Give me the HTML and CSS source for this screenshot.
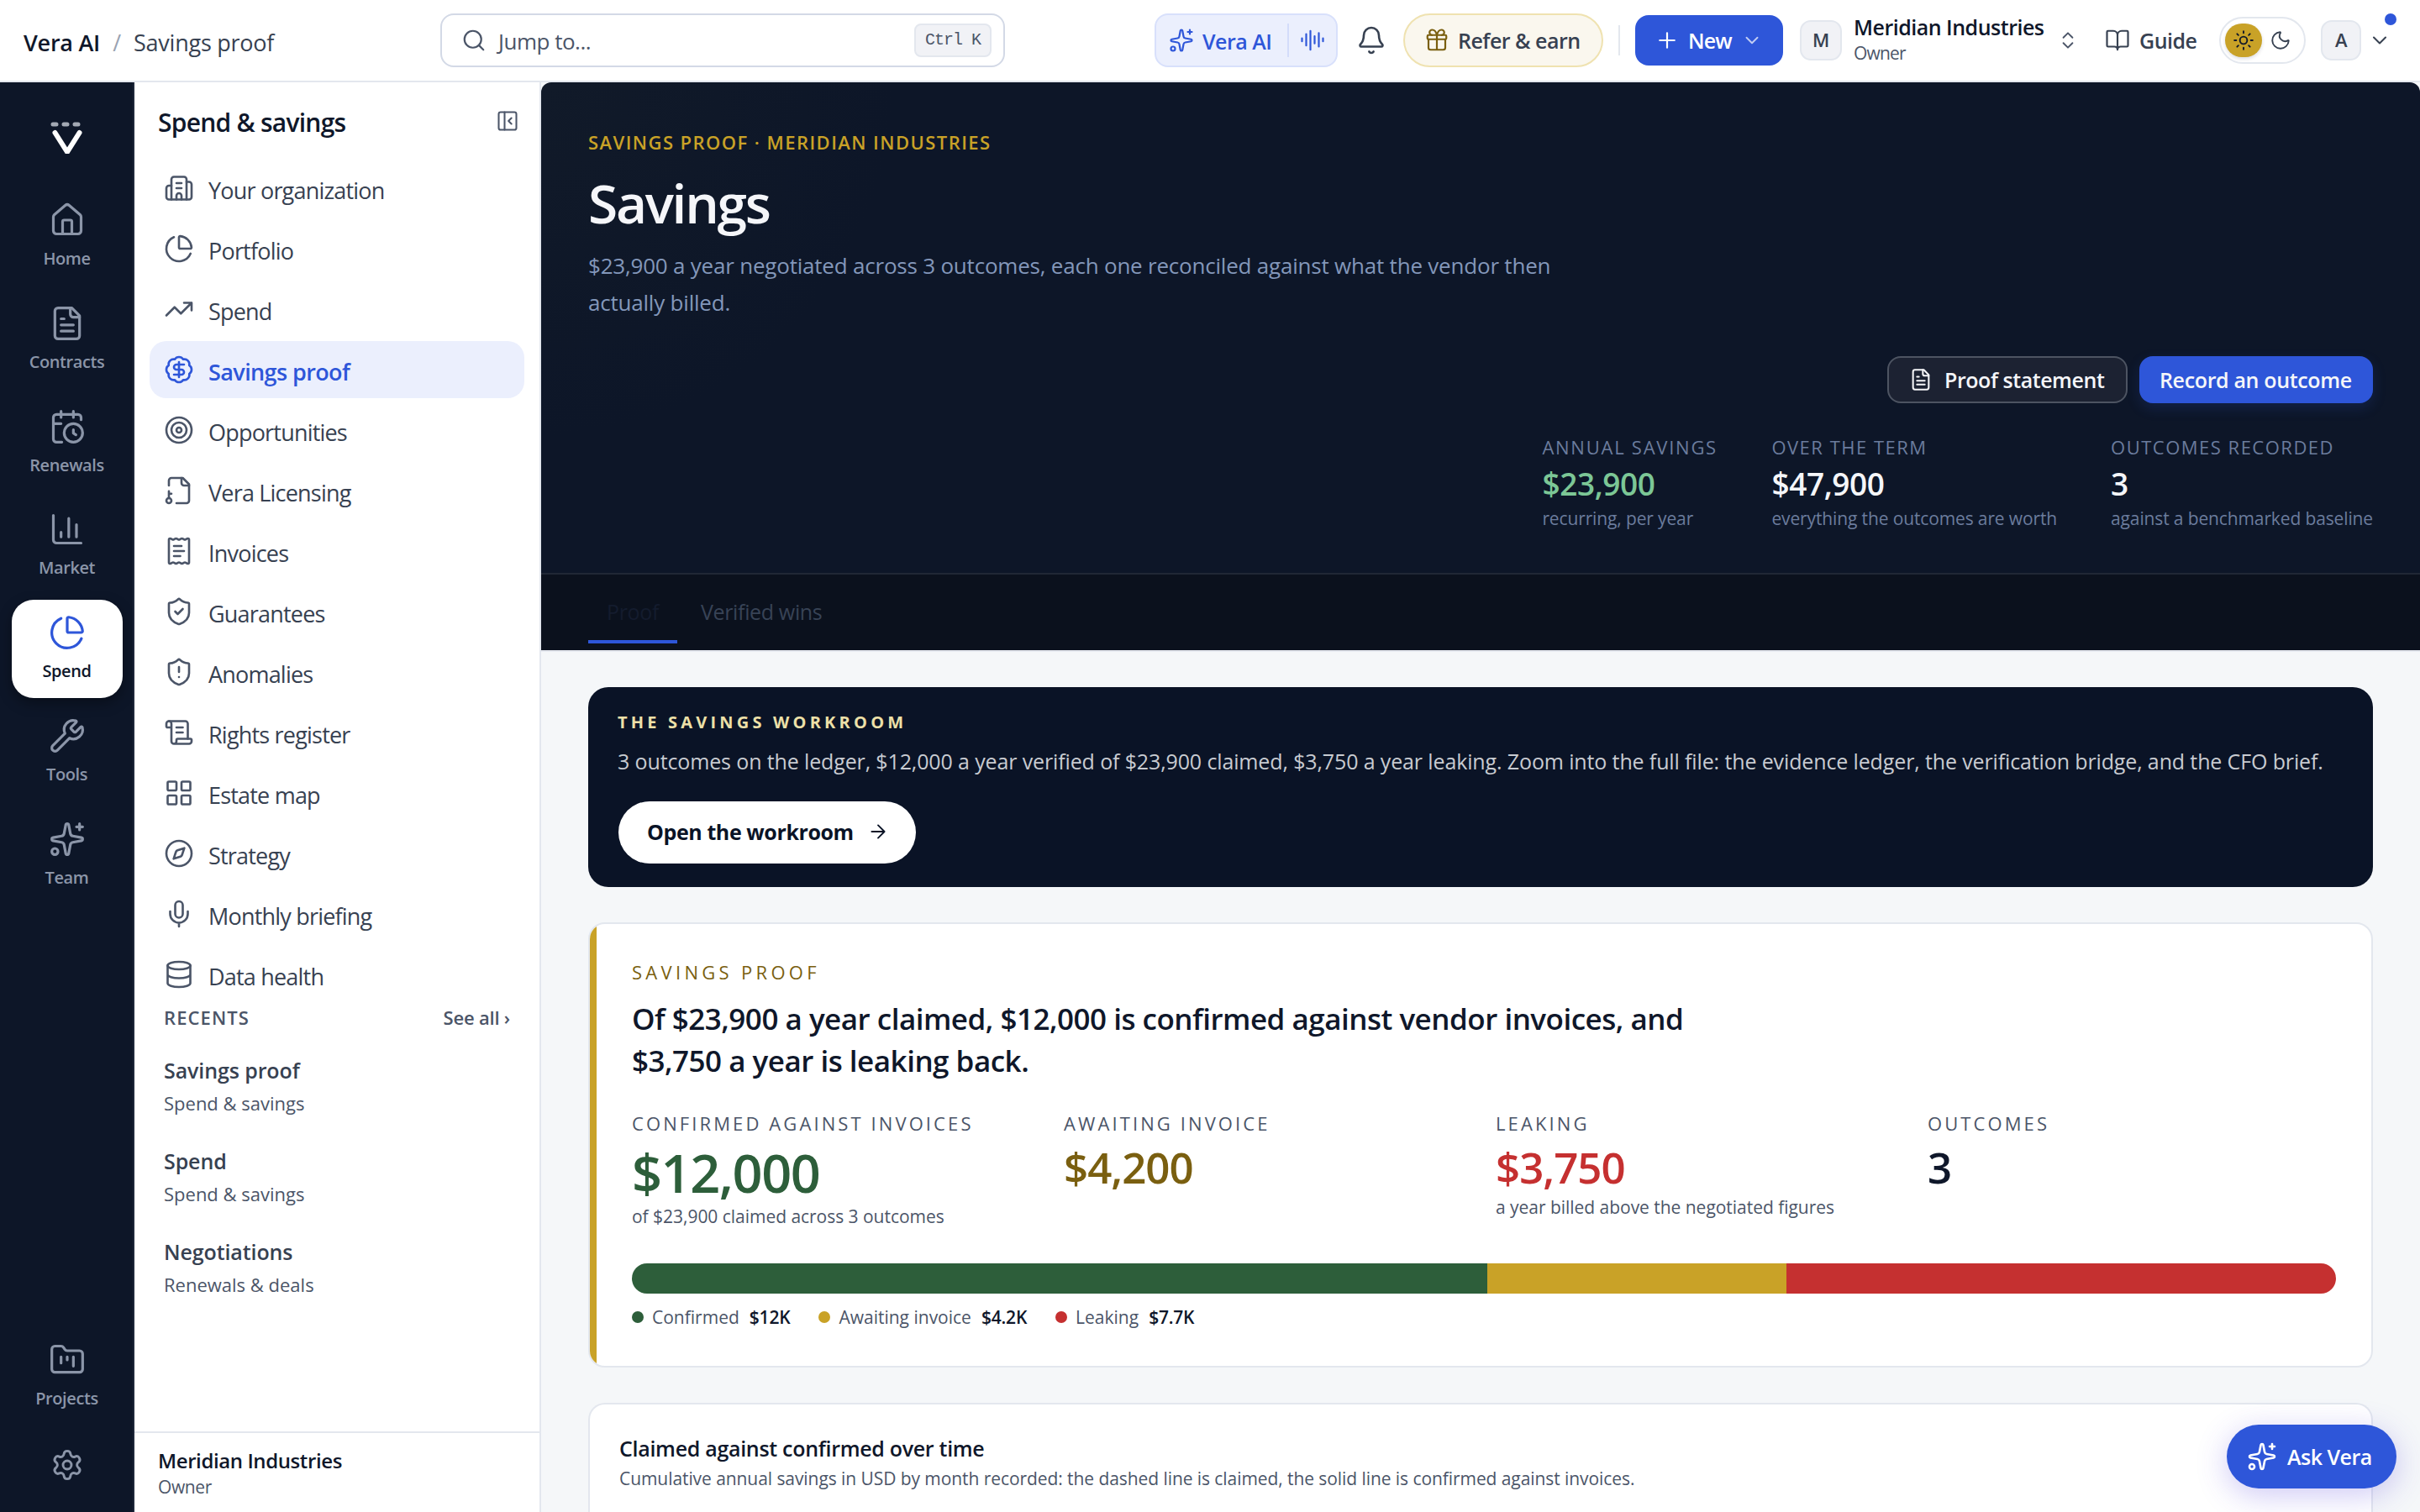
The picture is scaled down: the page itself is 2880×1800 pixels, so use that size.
FILE: index.html
```
<!DOCTYPE html>
<html lang="en">
<head>
	<meta charset="utf-8">
	<title>Savings proof - Vera AI</title>
	<link rel="stylesheet" href="styles.css">
</head>

<body>
	<!-- icon set -->
	<svg class="sprite">
		<symbol id="search" viewBox="0 0 24 24"><circle cx="11" cy="11" r="8"/><path d="m21 21-4.3-4.3"/></symbol>
		<symbol id="sparkles" viewBox="0 0 24 24"><path d="M11.017 2.814a1 1 0 0 1 1.966 0l1.051 5.558a2 2 0 0 0 1.594 1.594l5.558 1.051a1 1 0 0 1 0 1.966l-5.558 1.051a2 2 0 0 0-1.594 1.594l-1.051 5.558a1 1 0 0 1-1.966 0l-1.051-5.558a2 2 0 0 0-1.594-1.594l-5.558-1.051a1 1 0 0 1 0-1.966l5.558-1.051a2 2 0 0 0 1.594-1.594z"/><path d="M20 2v4M22 4h-4"/><circle cx="4" cy="20" r="2"/></symbol>
		<symbol id="wave" viewBox="0 0 24 24"><path d="M2 10v3M6 6v11M10 3v18M14 8v7M18 5v13M22 10v3"/></symbol>
		<symbol id="bell" viewBox="0 0 24 24"><path d="M10.268 21a2 2 0 0 0 3.464 0"/><path d="M3.262 15.326A1 1 0 0 0 4 17h16a1 1 0 0 0 .74-1.673C19.41 13.956 18 12.499 18 8A6 6 0 0 0 6 8c0 4.499-1.411 5.956-2.738 7.326"/></symbol>
		<symbol id="gift" viewBox="0 0 24 24"><path d="M12 7v14M20 11v8a2 2 0 0 1-2 2H6a2 2 0 0 1-2-2v-8"/><path d="M7.5 7a1 1 0 0 1 0-5A4.8 8 0 0 1 12 7a4.8 8 0 0 1 4.5-5 1 1 0 0 1 0 5"/><rect x="3" y="7" width="18" height="4" rx="1"/></symbol>
		<symbol id="plus" viewBox="0 0 24 24"><path d="M5 12h14M12 5v14"/></symbol>
		<symbol id="chevron" viewBox="0 0 24 24"><path d="m6 9 6 6 6-6"/></symbol>
		<symbol id="updown" viewBox="0 0 24 24"><path d="m7 15 5 5 5-5M7 9l5-5 5 5"/></symbol>
		<symbol id="book" viewBox="0 0 24 24"><path d="M12 7v14M3 18a1 1 0 0 1-1-1V4a1 1 0 0 1 1-1h5a4 4 0 0 1 4 4 4 4 0 0 1 4-4h5a1 1 0 0 1 1 1v13a1 1 0 0 1-1 1h-6a3 3 0 0 0-3 3 3 3 0 0 0-3-3z"/></symbol>
		<symbol id="sun" viewBox="0 0 24 24"><circle cx="12" cy="12" r="4"/><path d="M12 2v2M12 20v2M4.93 4.93l1.41 1.41M17.66 17.66l1.41 1.41M2 12h2M20 12h2M6.34 17.66l-1.41 1.41M19.07 4.93l-1.41 1.41"/></symbol>
		<symbol id="moon" viewBox="0 0 24 24"><path d="M20.985 12.486a9 9 0 1 1-9.473-9.472c.405-.022.617.46.402.803a6 6 0 0 0 8.268 8.268c.344-.215.825-.004.803.401"/></symbol>
		<symbol id="home" viewBox="0 0 24 24"><path d="M15 21v-8a1 1 0 0 0-1-1h-4a1 1 0 0 0-1 1v8"/><path d="M3 10a2 2 0 0 1 .709-1.528l7-6a2 2 0 0 1 2.582 0l7 6A2 2 0 0 1 21 10v9a2 2 0 0 1-2 2H5a2 2 0 0 1-2-2z"/></symbol>
		<symbol id="file" viewBox="0 0 24 24"><path d="M15 2H6a2 2 0 0 0-2 2v16a2 2 0 0 0 2 2h12a2 2 0 0 0 2-2V7z"/><path d="M14 2v4a2 2 0 0 0 2 2h4M10 9H8M16 13H8M16 17H8"/></symbol>
		<symbol id="calendar" viewBox="0 0 24 24"><path d="M16 14v2.2l1.6 1M16 2v4M21 7.5V6a2 2 0 0 0-2-2H5a2 2 0 0 0-2 2v14a2 2 0 0 0 2 2h3.5M3 10h5M8 2v4"/><circle cx="16" cy="16" r="6"/></symbol>
		<symbol id="chart" viewBox="0 0 24 24"><path d="M3 3v16a2 2 0 0 0 2 2h16M18 17V9M13 17V5M8 17v-3"/></symbol>
		<symbol id="pie" viewBox="0 0 24 24"><path d="M21 12c.552 0 1.005-.449.95-.998a10 10 0 0 0-8.953-8.951c-.55-.055-.998.398-.998.95v8a1 1 0 0 0 1 1z"/><path d="M21.21 15.89A10 10 0 1 1 8 2.83"/></symbol>
		<symbol id="wrench" viewBox="0 0 24 24"><path d="M14.7 6.3a1 1 0 0 0 0 1.4l1.6 1.6a1 1 0 0 0 1.4 0l3.106-3.105c.32-.322.863-.22.983.218a6 6 0 0 1-8.259 7.057l-7.91 7.91a1 1 0 0 1-2.999-3l7.91-7.91a6 6 0 0 1 7.057-8.259c.438.12.54.662.219.984z"/></symbol>
		<symbol id="folder" viewBox="0 0 24 24"><path d="M4 20h16a2 2 0 0 0 2-2V8a2 2 0 0 0-2-2h-7.93a2 2 0 0 1-1.66-.9l-.82-1.2A2 2 0 0 0 7.93 3H4a2 2 0 0 0-2 2v13c0 1.1.9 2 2 2Z"/><path d="M8 10v4M12 10v2M16 10v6"/></symbol>
		<symbol id="gear" viewBox="0 0 24 24"><path d="M9.671 4.136a2.34 2.34 0 0 1 4.659 0 2.34 2.34 0 0 0 3.319 1.915 2.34 2.34 0 0 1 2.33 4.033 2.34 2.34 0 0 0 0 3.831 2.34 2.34 0 0 1-2.33 4.033 2.34 2.34 0 0 0-3.319 1.915 2.34 2.34 0 0 1-4.659 0 2.34 2.34 0 0 0-3.32-1.915 2.34 2.34 0 0 1-2.33-4.033 2.34 2.34 0 0 0 0-3.831A2.34 2.34 0 0 1 6.35 6.051a2.34 2.34 0 0 0 3.319-1.915"/><circle cx="12" cy="12" r="3"/></symbol>
		<symbol id="panel" viewBox="0 0 24 24"><rect x="3" y="3" width="18" height="18" rx="2"/><path d="M9 3v18M16 15l-3-3 3-3"/></symbol>
		<symbol id="building" viewBox="0 0 24 24"><path d="M10 12h4M10 8h4M14 21v-3a2 2 0 0 0-4 0v3"/><path d="M6 10H4a2 2 0 0 0-2 2v7a2 2 0 0 0 2 2h16a2 2 0 0 0 2-2V9a2 2 0 0 0-2-2h-2"/><path d="M6 21V5a2 2 0 0 1 2-2h8a2 2 0 0 1 2 2v16"/></symbol>
		<symbol id="trend" viewBox="0 0 24 24"><path d="M16 7h6v6M22 7l-8.5 8.5-5-5L2 17"/></symbol>
		<symbol id="badge" viewBox="0 0 24 24"><path d="M3.85 8.62a4 4 0 0 1 4.78-4.77 4 4 0 0 1 6.74 0 4 4 0 0 1 4.78 4.78 4 4 0 0 1 0 6.74 4 4 0 0 1-4.77 4.78 4 4 0 0 1-6.75 0 4 4 0 0 1-4.78-4.77 4 4 0 0 1 0-6.76Z"/><path d="M16 8h-6a2 2 0 1 0 0 4h4a2 2 0 1 1 0 4H8M12 18V6"/></symbol>
		<symbol id="target" viewBox="0 0 24 24"><circle cx="12" cy="12" r="10"/><circle cx="12" cy="12" r="6"/><circle cx="12" cy="12" r="2"/></symbol>
		<symbol id="filekey" viewBox="0 0 24 24"><path d="M10 22h8a2 2 0 0 0 2-2V7l-5-5H6a2 2 0 0 0-2 2v4"/><path d="M14 2v4a2 2 0 0 0 2 2h4M4 18v-5.500M4 14.500h2"/><circle cx="4" cy="20" r="2"/></symbol>
		<symbol id="receipt" viewBox="0 0 24 24"><path d="M4 3a1 1 0 0 1 1-1 1.3 1.3 0 0 1 .7.2l.933.6a1.3 1.3 0 0 0 1.4 0l.934-.6a1.3 1.3 0 0 1 1.4 0l.933.6a1.3 1.3 0 0 0 1.4 0l.933-.6a1.3 1.3 0 0 1 1.4 0l.934.6a1.3 1.3 0 0 0 1.4 0l.933-.6A1.3 1.3 0 0 1 19 2a1 1 0 0 1 1 1v18a1 1 0 0 1-1 1 1.3 1.3 0 0 1-.7-.2l-.933-.6a1.3 1.3 0 0 0-1.4 0l-.934.6a1.3 1.3 0 0 1-1.4 0l-.933-.6a1.3 1.3 0 0 0-1.4 0l-.933.6a1.3 1.3 0 0 1-1.4 0l-.934-.6a1.3 1.3 0 0 0-1.4 0l-.933.6a1.3 1.3 0 0 1-.7.2 1 1 0 0 1-1-1z"/><path d="M14 8H8M16 12H8M13 16H8"/></symbol>
		<symbol id="shield" viewBox="0 0 24 24"><path d="M20 13c0 5-3.5 7.5-7.66 8.95a1 1 0 0 1-.67-.01C7.5 20.5 4 18 4 13V6a1 1 0 0 1 1-1c2 0 4.5-1.2 6.24-2.72a1.17 1.17 0 0 1 1.52 0C14.51 3.81 17 5 19 5a1 1 0 0 1 1 1z"/></symbol>
		<symbol id="scroll" viewBox="0 0 24 24"><path d="M15 12h-5M15 8h-5M19 17V5a2 2 0 0 0-2-2H4"/><path d="M8 21h12a2 2 0 0 0 2-2v-1a1 1 0 0 0-1-1H11a1 1 0 0 0-1 1v1a2 2 0 1 1-4 0V5a2 2 0 1 0-4 0v2a1 1 0 0 0 1 1h3"/></symbol>
		<symbol id="grid" viewBox="0 0 24 24"><rect x="3" y="3" width="7" height="7" rx="1"/><rect x="14" y="3" width="7" height="7" rx="1"/><rect x="14" y="14" width="7" height="7" rx="1"/><rect x="3" y="14" width="7" height="7" rx="1"/></symbol>
		<symbol id="compass" viewBox="0 0 24 24"><circle cx="12" cy="12" r="10"/><path d="m16.24 7.76-1.804 5.411a2 2 0 0 1-1.265 1.265L7.76 16.24l1.804-5.411a2 2 0 0 1 1.265-1.265z"/></symbol>
		<symbol id="mic" viewBox="0 0 24 24"><path d="M12 19v3M19 10v2a7 7 0 0 1-14 0v-2"/><rect x="9" y="2" width="6" height="13" rx="3"/></symbol>
		<symbol id="database" viewBox="0 0 24 24"><ellipse cx="12" cy="5" rx="9" ry="3"/><path d="M3 5v14a9 3 0 0 0 18 0V5M3 12a9 3 0 0 0 18 0"/></symbol>
		<symbol id="arrow" viewBox="0 0 24 24"><path d="M5 12h14M12 5l7 7-7 7"/></symbol>
	</svg>

	<header class="topbar">
		<div class="crumbs"><b>Vera AI</b><i>/</i><span>Savings proof</span></div>
		<div class="search">
			<svg class="icon s30"><use href="#search"/></svg>
			<span>Jump to...</span>
			<kbd>Ctrl K</kbd>
		</div>
		<div class="tools">
			<div class="vera">
				<svg class="icon s30"><use href="#sparkles"/></svg>
				<span>Vera AI</span>
				<div class="wave"><svg class="icon s30"><use href="#wave"/></svg></div>
			</div>
			<svg class="icon s36 bell"><use href="#bell"/></svg>
			<div class="refer"><svg class="icon s30"><use href="#gift"/></svg><span>Refer &amp; earn</span></div>
			<div class="divider"></div>
			<div class="new">
				<svg class="icon s30"><use href="#plus"/></svg>
				<span>New</span>
				<svg class="icon s26"><use href="#chevron"/></svg>
			</div>
			<div class="avatar org">M</div>
			<div class="account"><b>Meridian Industries</b><span>Owner</span></div>
			<svg class="icon s26 updown"><use href="#updown"/></svg>
			<div class="guide"><svg class="icon s30"><use href="#book"/></svg><span>Guide</span></div>
			<div class="theme">
				<div class="sun"><svg class="icon s26"><use href="#sun"/></svg></div>
				<svg class="icon s26"><use href="#moon"/></svg>
			</div>
			<div class="avatar">A</div>
			<svg class="icon s28 more"><use href="#chevron"/></svg>
		</div>
		<div class="dot"></div>
	</header>

	<div class="shell">
		<nav class="rail">
			<svg class="logo" viewBox="0 0 44 44">
				<path class="dashes" d="M5 9h4M18 9h4M31 9h4"/>
				<path class="vee" d="M7.500 19 22 42 36.500 19"/>
			</svg>
			<div class="rail-item"><svg class="icon s44"><use href="#home"/></svg>Home</div>
			<div class="rail-item"><svg class="icon s44"><use href="#file"/></svg>Contracts</div>
			<div class="rail-item"><svg class="icon s44"><use href="#calendar"/></svg>Renewals</div>
			<div class="rail-item"><svg class="icon s44"><use href="#chart"/></svg>Market</div>
			<div class="rail-item on"><svg class="icon s44"><use href="#pie"/></svg>Spend</div>
			<div class="rail-item"><svg class="icon s44"><use href="#wrench"/></svg>Tools</div>
			<div class="rail-item"><svg class="icon s44"><use href="#sparkles"/></svg>Team</div>
			<div class="rail-end">
				<div class="rail-item"><svg class="icon s44"><use href="#folder"/></svg>Projects</div>
				<svg class="icon s40"><use href="#gear"/></svg>
			</div>
		</nav>

		<aside class="sidebar">
			<div class="side-head">
				<h2>Spend &amp; savings</h2>
				<svg class="icon s28"><use href="#panel"/></svg>
			</div>
			<div class="menu">
				<a><svg class="icon s36"><use href="#building"/></svg><span>Your organization</span></a>
				<a><svg class="icon s36"><use href="#pie"/></svg><span>Portfolio</span></a>
				<a><svg class="icon s36"><use href="#trend"/></svg><span>Spend</span></a>
				<a class="on"><svg class="icon s36"><use href="#badge"/></svg><span>Savings proof</span></a>
				<a><svg class="icon s36"><use href="#target"/></svg><span>Opportunities</span></a>
				<a><svg class="icon s36"><use href="#filekey"/></svg><span>Vera Licensing</span></a>
				<a><svg class="icon s36"><use href="#receipt"/></svg><span>Invoices</span></a>
				<a><svg class="icon s36" viewBox="0 0 24 24"><use href="#shield"/><path d="m9 12 2 2 4-4"/></svg><span>Guarantees</span></a>
				<a><svg class="icon s36" viewBox="0 0 24 24"><use href="#shield"/><path d="M12 8v4M12 16h.01"/></svg><span>Anomalies</span></a>
				<a><svg class="icon s36"><use href="#scroll"/></svg><span>Rights register</span></a>
				<a><svg class="icon s36"><use href="#grid"/></svg><span>Estate map</span></a>
				<a><svg class="icon s36"><use href="#compass"/></svg><span>Strategy</span></a>
				<a><svg class="icon s36"><use href="#mic"/></svg><span>Monthly briefing</span></a>
				<a><svg class="icon s36"><use href="#database"/></svg><span>Data health</span></a>
			</div>
			<div class="recents-head"><span>RECENTS</span><b>See all ›</b></div>
			<div class="recent"><b>Savings proof</b><span>Spend &amp; savings</span></div>
			<div class="recent"><b>Spend</b><span>Spend &amp; savings</span></div>
			<div class="recent"><b>Negotiations</b><span>Renewals &amp; deals</span></div>
			<div class="side-foot"><b>Meridian Industries</b><span>Owner</span></div>
		</aside>

		<main>
			<section class="hero">
				<div class="eyebrow">SAVINGS PROOF · MERIDIAN INDUSTRIES</div>
				<h1>Savings</h1>
				<p>$23,900 a year negotiated across 3 outcomes, each one reconciled against what the vendor then actually billed.</p>
				<div class="actions">
					<button class="ghost"><svg class="icon s28"><use href="#file"/></svg>Proof statement</button>
					<button class="primary">Record an outcome</button>
				</div>
				<div class="stats">
					<div class="annual"><label>ANNUAL SAVINGS</label><strong class="mint">$23,900</strong><small>recurring, per year</small></div>
					<div><label>OVER THE TERM</label><strong>$47,900</strong><small>everything the outcomes are worth</small></div>
					<div><label>OUTCOMES RECORDED</label><strong>3</strong><small>against a benchmarked baseline</small></div>
				</div>
			</section>
			<div class="tabs">
				<a class="on">Proof</a>
				<a>Verified wins</a>
			</div>

			<div class="content">
				<section class="workroom">
					<h4>THE SAVINGS WORKROOM</h4>
					<p>3 outcomes on the ledger, $12,000 a year verified of $23,900 claimed, $3,750 a year leaking. Zoom into the full file: the evidence ledger, the verification bridge, and the CFO brief.</p>
					<button>Open the workroom<svg class="icon s26"><use href="#arrow"/></svg></button>
				</section>

				<section class="card proof">
					<div class="tag">SAVINGS PROOF</div>
					<h3>Of $23,900 a year claimed, $12,000 is confirmed against vendor invoices, and $3,750 a year is leaking back.</h3>
					<div class="figures">
						<div><label>CONFIRMED AGAINST INVOICES</label><strong class="big green">$12,000</strong><small>of $23,900 claimed across 3 outcomes</small></div>
						<div><label>AWAITING INVOICE</label><strong class="amber">$4,200</strong></div>
						<div><label>LEAKING</label><strong class="red">$3,750</strong><small>a year billed above the negotiated figures</small></div>
						<div><label>OUTCOMES</label><strong>3</strong></div>
					</div>
					<div class="bar">
						<div class="bg-green" style="width: 50.2%"></div>
						<div class="bg-gold" style="width: 17.55%"></div>
						<div class="bg-red" style="width: 32.25%"></div>
					</div>
					<div class="legend">
						<div><i class="bg-green"></i>Confirmed<b>$12K</b></div>
						<div><i class="bg-gold"></i>Awaiting invoice<b>$4.2K</b></div>
						<div><i class="bg-red"></i>Leaking<b>$7.7K</b></div>
					</div>
				</section>

				<section class="card chart">
					<h5>Claimed against confirmed over time</h5>
					<p>Cumulative annual savings in USD by month recorded: the dashed line is claimed, the solid line is confirmed against invoices.</p>
				</section>
			</div>
		</main>
	</div>

	<div class="ask"><svg class="icon s36"><use href="#sparkles"/></svg>Ask Vera</div>
</body>
</html>
```
FILE: styles.css
```
* {
	box-sizing: border-box;
}
body {
	margin: 0;
	height: 1800px;
	overflow: hidden;
	display: flex;
	flex-direction: column;
	font-family: "Open Sans", "Noto Sans", sans-serif;
	color: #0f172a;
	background-color: #f5f7f9;
	white-space: nowrap;
}
h1, h2, h3, h4, h5, p {
	margin: 0;
}
b, label, strong, small {
	display: block;
	font-weight: 600;
}
i {
	font-style: normal;
}
button {
	font-family: inherit;
	border: none;
	display: flex;
	align-items: center;
}
.sprite {
	position: absolute;
	width: 0;
	height: 0;
}
.icon {
	fill: none;
	stroke: currentColor;
	stroke-width: 1.75;
	stroke-linecap: round;
	stroke-linejoin: round;
	flex: none;
}
.s26 { width: 26px; height: 26px; }
.s28 { width: 28px; height: 28px; }
.s30 { width: 30px; height: 30px; }
.s36 { width: 36px; height: 36px; }
.s40 { width: 40px; height: 40px; }
.s44 { width: 44px; height: 44px; }

/* top bar */
.topbar {
	position: relative;
	flex: none;
	height: 98px;
	display: flex;
	align-items: center;
	padding: 0 34px 0 28px;
	background-color: #fff;
	border-bottom: 2px solid #e3e7ee;
	font-size: 25px;
	letter-spacing: -0.5px;
	color: #374151;
}
.crumbs {
	width: 496px;
	display: flex;
	padding-top: 4px;
	font-size: 27px;
	letter-spacing: -0.25px;
}
.crumbs b {
	color: #0f172a;
}
.crumbs i {
	width: 40px;
	text-align: center;
	color: #9aa3b2;
}
.search {
	width: 672px;
	height: 64px;
	display: flex;
	align-items: center;
	padding: 0 14px 0 23px;
	border: 2px solid #d3d9e6;
	border-radius: 16px;
	font-size: 26px;
	color: #4b5568;
}
.search span {
	margin-left: 14px;
	padding-top: 1px;
}
.search kbd {
	margin-left: auto;
	width: 92px;
	height: 40px;
	line-height: 35px;
	text-align: center;
	border: 2px solid #e3e7ee;
	border-radius: 8px;
	background-color: #f1f2f6;
	font-family: "Liberation Mono", monospace;
	font-size: 20px;
	letter-spacing: -1px;
}
.tools {
	margin-left: auto;
	display: flex;
	align-items: center;
	font-weight: 600;
}
.vera {
	width: 218px;
	height: 64px;
	display: flex;
	align-items: center;
	padding-left: 15px;
	border: 2px solid #d8e0fb;
	border-radius: 16px;
	background-color: #ebeffd;
	color: #2e56d9;
}
.vera span {
	width: 101px;
	padding-left: 10px;
	padding-top: 1px;
}
.wave {
	height: 40px;
	display: flex;
	align-items: center;
	margin-left: 10px;
	padding-left: 13px;
	border-left: 2px solid #d3dcfa;
}
.bell {
	margin: 0 20px 0 22px;
}
.refer {
	width: 238px;
	height: 64px;
	display: flex;
	align-items: center;
	gap: 10px;
	padding-left: 23px;
	border: 2px solid #efe2b0;
	border-radius: 32px;
	background-color: #faf7ee;
}
.refer .icon {
	color: #7a5f10;
}
.divider {
	width: 2px;
	height: 36px;
	margin: 0 18px;
	background-color: #e3e7ee;
}
.new {
	width: 176px;
	height: 60px;
	display: flex;
	align-items: center;
	padding-left: 23px;
	border-radius: 16px;
	background-color: #2e56d9;
	color: #fff;
}
.new span {
	width: 63px;
	margin-left: 10px;
	letter-spacing: -0.9px;
}
.new .s26 {
	opacity: .7;
}
.avatar {
	width: 48px;
	height: 48px;
	line-height: 43px;
	text-align: center;
	border: 2px solid #e3e7ee;
	border-radius: 13px;
	background-color: #f1f2f6;
	font-size: 22px;
}
.org {
	width: 50px;
	margin: 0 14px 0 20px;
}
.account {
	width: 230px;
}
.account b {
	line-height: 28px;
	color: #0f172a;
}
.account span {
	display: block;
	padding-top: 2px;
	line-height: 30px;
	font-size: 21px;
	font-weight: 400;
	letter-spacing: -0.8px;
	color: #4b5568;
}
.updown {
	margin: 0 31px 0 12px;
	color: #4b5568;
}
.guide {
	width: 110px;
	display: flex;
	align-items: center;
	gap: 11px;
}
.theme {
	width: 103px;
	height: 56px;
	display: flex;
	align-items: center;
	gap: 9px;
	margin: 0 18px 0 26px;
	padding-left: 5px;
	border: 2px solid #e3e7ee;
	border-radius: 28px;
}
.sun {
	width: 44px;
	height: 40px;
	display: flex;
	align-items: center;
	justify-content: center;
	border-radius: 20px;
	background-color: #c9a227;
	color: #0f172a;
	box-shadow: 0 2px 4px rgba(15, 23, 42, .15);
}
.more {
	margin-left: 8px;
}
.dot {
	position: absolute;
	top: 16px;
	right: 28px;
	width: 14px;
	height: 14px;
	border-radius: 50%;
	background-color: #2e56d9;
}

.shell {
	flex: 1;
	min-height: 0;
	display: flex;
}

/* dark icon rail */
.rail {
	width: 160px;
	display: flex;
	flex-direction: column;
	align-items: center;
	gap: 6px;
	padding: 41px 0 36px 1px;
	background-color: #0d1628;
	border-right: 2px solid #1e2739;
}
.logo {
	width: 44px;
	height: 44px;
	margin-bottom: 34px;
	fill: none;
	stroke-linecap: round;
	stroke-linejoin: round;
}
.dashes {
	stroke: #a3a9b4;
	stroke-width: 5;
}
.vee {
	stroke: #fff;
	stroke-width: 6;
}
.rail-item {
	flex: none;
	width: 132px;
	height: 116.8px;
	display: flex;
	flex-direction: column;
	align-items: center;
	gap: 9px;
	padding-top: 17px;
	line-height: 30px;
	font-size: 20px;
	font-weight: 600;
	letter-spacing: -0.4px;
	color: #8b95a8;
	border-radius: 26px;
}
.rail-item.on {
	background-color: #fff;
	color: #0f172a;
	box-shadow: 0 6px 16px rgba(0, 0, 0, .35);
}
.rail-item.on .icon {
	color: #2e56d9;
}
.rail-end {
	margin-top: auto;
	display: flex;
	flex-direction: column;
	align-items: center;
	gap: 27px;
	color: #8b95a8;
}

/* section menu */
.sidebar {
	width: 484px;
	display: flex;
	flex-direction: column;
	background-color: #fff;
	border-right: 2px solid #e3e7ee;
	color: #4b5568;
}
.side-head {
	flex: none;
	height: 92px;
	display: flex;
	align-items: center;
	justify-content: space-between;
	padding: 0 24px 0 28px;
}
.side-head h2 {
	padding-top: 2px;
	font-size: 30px;
	font-weight: 600;
	letter-spacing: -0.75px;
	color: #0f172a;
}
.menu {
	display: flex;
	flex-direction: column;
	gap: 4px;
	padding: 0 18px;
}
.menu a {
	height: 68px;
	display: flex;
	align-items: center;
	gap: 17px;
	padding-left: 17px;
	border-radius: 20px;
	font-size: 27px;
	letter-spacing: -0.8px;
}
.menu span {
	padding-top: 4px;
	color: #374151;
}
.menu .on {
	background-color: #ebeffd;
	color: #2e56d9;
	font-weight: 600;
	letter-spacing: -0.6px;
}
.menu .on span {
	color: #2e56d9;
}
.recents-head {
	height: 34px;
	display: flex;
	align-items: center;
	justify-content: space-between;
	margin-bottom: 14px;
	padding: 0 35px;
	font-size: 22px;
}
.recents-head span {
	font-weight: 600;
	letter-spacing: 1.1px;
}
.recents-head b {
	letter-spacing: -0.2px;
}
.recent {
	height: 108px;
	padding: 14px 35px 0;
	line-height: 36px;
	font-size: 22px;
}
.recent b {
	margin-bottom: 3px;
	font-size: 25px;
	letter-spacing: -0.1px;
	color: #374151;
}
.side-foot {
	height: 96px;
	margin-top: auto;
	padding: 17px 28px 0;
	line-height: 30px;
	border-top: 2px solid #e3e7ee;
	font-size: 21px;
	letter-spacing: -0.4px;
}
.side-foot b {
	line-height: 32px;
	font-size: 24px;
	color: #0f172a;
}

/* main column */
main {
	flex: 1;
	min-width: 0;
}
.hero {
	height: 586px;
	padding: 55px 56px 0;
	border-radius: 12px 12px 0 0;
	border-bottom: 2px solid #202735;
	background: radial-gradient(circle at 0 0, #111a29 0, #0d1628 420px);
	color: #f5f6f9;
}
.eyebrow {
	line-height: 32px;
	font-size: 22px;
	font-weight: 600;
	letter-spacing: 1.44px;
	color: #c9a227;
}
.hero h1 {
	margin-top: 22px;
	line-height: 70px;
	font-size: 64px;
	font-weight: 600;
	letter-spacing: -2.3px;
}
.hero p {
	width: 1200px;
	margin-top: 17px;
	line-height: 44px;
	font-size: 26px;
	letter-spacing: -0.21px;
	white-space: normal;
	color: #8397ba;
}
.actions {
	display: flex;
	justify-content: flex-end;
	gap: 14px;
	margin-top: 42px;
}
.actions button {
	height: 56px;
	border-radius: 16px;
	font-size: 25px;
	font-weight: 600;
	letter-spacing: -0.45px;
	color: #f5f6f9;
}
.ghost {
	width: 286px;
	gap: 14px;
	padding: 0 0 0 24px;
	border: 2px solid #4d5462;
	background-color: #1c2232;
}
.actions .primary {
	width: 278px;
	padding: 0 0 0 24px;
	letter-spacing: -0.35px;
	background-color: #2e56d9;
	box-shadow: 0 6px 16px rgba(46, 86, 217, .18);
}
.stats {
	display: flex;
	justify-content: flex-end;
	gap: 64px;
	margin-top: 36px;
	color: #6b7c9d;
}
.stats label {
	line-height: 32px;
	font-size: 22px;
	font-weight: 500;
	letter-spacing: 1.5px;
}
.stats strong {
	margin: 4px 0 2px;
	line-height: 48px;
	font-size: 37px;
	letter-spacing: -0.4px;
	color: #f5f6f9;
}
.stats .annual {
	width: 209px;
}
.stats .annual label {
	letter-spacing: 1.75px;
}
.stats .mint {
	color: #7cc796;
}
.stats small {
	line-height: 30px;
	font-size: 21px;
	font-weight: 400;
	letter-spacing: -0.13px;
}
.tabs {
	height: 92px;
	display: flex;
	gap: 6px;
	padding: 0 56px;
	border-bottom: 2px solid #e6e9f0;
	background-color: #0b111d;
	font-size: 25px;
	letter-spacing: -0.35px;
	color: #384356;
}
.tabs a {
	height: 82px;
	padding: 27px 22px 0;
	line-height: 34px;
}
.tabs .on {
	border-bottom: 4px solid #2e56d9;
	color: #141c2e;
}
.content {
	display: flex;
	flex-direction: column;
	gap: 42px;
	padding: 42px 56px 0;
}
.workroom {
	height: 238px;
	padding: 28px 35px;
	border-radius: 24px;
	background-color: #0a1326;
}
.workroom h4 {
	line-height: 28px;
	font-size: 20px;
	letter-spacing: 4.2px;
	color: #ede0a8;
}
.workroom p {
	margin: 12px 0 28px;
	line-height: 40px;
	font-size: 25px;
	letter-spacing: -0.13px;
	color: #c8cbd1;
}
.workroom button {
	width: 354px;
	height: 74px;
	justify-content: space-between;
	margin-left: 1px;
	padding: 0 32px 2px 34px;
	border-radius: 37px;
	background-color: #fff;
	font-size: 25px;
	font-weight: 700;
	letter-spacing: -0.4px;
	color: #0a1326;
}
.card {
	position: relative;
	overflow: hidden;
	background-color: #fff;
	border: 2px solid #e3e7ee;
	border-radius: 20px;
}
.proof {
	height: 530px;
	padding: 42px 42px 0 50px;
}
.proof::before {
	content: "";
	position: absolute;
	top: 0;
	left: 0;
	width: 8px;
	height: 100%;
	background-color: #c9a227;
}
.tag {
	line-height: 30px;
	font-size: 22px;
	font-weight: 500;
	letter-spacing: 4.3px;
	color: #7a5f10;
}
.proof h3 {
	width: 1290px;
	margin-top: 16px;
	line-height: 50px;
	font-size: 35px;
	font-weight: 600;
	letter-spacing: -0.5px;
	white-space: normal;
}
.figures {
	height: 142px;
	display: grid;
	grid-template-columns: repeat(4, 1fr);
	column-gap: 28px;
	margin-top: 34px;
}
.figures label {
	margin-bottom: 10px;
	line-height: 30px;
	font-size: 22px;
	font-weight: 500;
	letter-spacing: 3.1px;
	color: #4b5568;
}
.figures strong {
	margin-bottom: 5px;
	line-height: 55px;
	font-size: 51px;
	letter-spacing: -1px;
}
.figures .big {
	margin-bottom: 3px;
	line-height: 68px;
	font-size: 63px;
	letter-spacing: -1.4px;
}
.green { color: #2d5e3a; }
.amber { color: #7a5f10; }
.red { color: #c53030; }
.figures small {
	line-height: 30px;
	font-size: 21px;
	font-weight: 400;
	letter-spacing: -0.03px;
	color: #4b5568;
}
.bar {
	height: 36px;
	display: flex;
	margin-top: 40px;
	border-radius: 18px;
	overflow: hidden;
}
.bg-green { background-color: #2d5e3a; }
.bg-gold { background-color: #c9a227; }
.bg-red { background-color: #c53030; }
.legend {
	display: flex;
	gap: 34px;
	margin-top: 13px;
	line-height: 30px;
	font-size: 21px;
	color: #4b5568;
}
.legend div {
	display: flex;
	align-items: center;
}
.legend i {
	width: 14px;
	height: 14px;
	margin-right: 10px;
	border-radius: 50%;
}
.legend b {
	margin-left: 12px;
	letter-spacing: -0.2px;
	color: #0f172a;
}
.chart {
	height: 130px;
	padding: 34px 35px 0;
	border-bottom: none;
	border-radius: 20px 20px 0 0;
}
.chart h5 {
	line-height: 36px;
	font-size: 25px;
	font-weight: 600;
	letter-spacing: -0.3px;
}
.chart p {
	margin-top: 3px;
	line-height: 30px;
	font-size: 21px;
	letter-spacing: -0.07px;
	color: #4b5568;
}

/* floating assistant button */
.ask {
	position: absolute;
	right: 28px;
	bottom: 28px;
	width: 202px;
	height: 76px;
	display: flex;
	align-items: center;
	gap: 12px;
	padding-left: 24px;
	border-radius: 38px;
	background-color: #2e56d9;
	box-shadow: 0 8px 36px rgba(79, 60, 220, .28);
	font-size: 25px;
	font-weight: 600;
	letter-spacing: -0.5px;
	color: #fff;
}
```
